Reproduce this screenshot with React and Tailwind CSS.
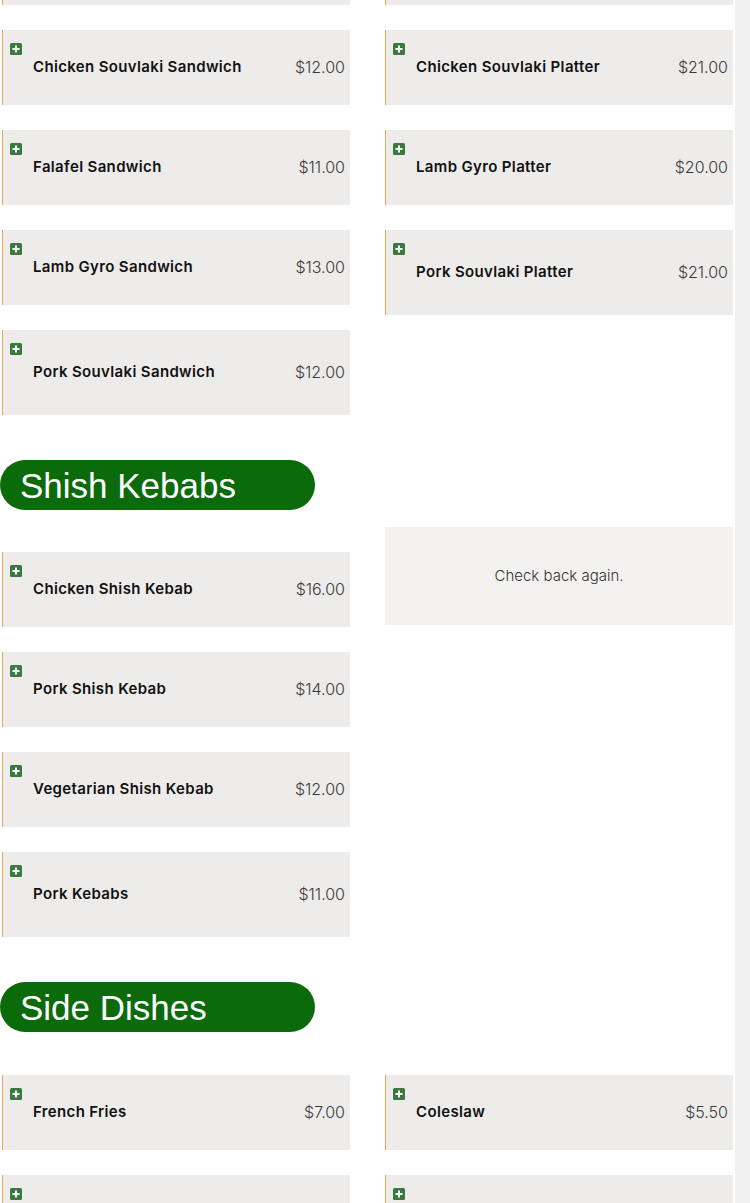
import React from "react";

const font = { fontFamily: "Inter, 'Noto Sans', sans-serif" };

function PlusIcon() {
  return (
    <svg
      className="absolute left-[7px] top-[13px]"
      width="12"
      height="12"
      viewBox="0 0 12 12"
    >
      <rect x="0" y="0" width="12" height="12" rx="1.5" fill="#3b7a3e" />
      <rect x="5" y="2.5" width="2" height="7" fill="#ffffff" />
      <rect x="2.5" y="5" width="7" height="2" fill="#ffffff" />
    </svg>
  );
}

function Card({ name, price, last }) {
  return (
    <div
      className={`relative flex items-center justify-between bg-[#eeeceb] border-l border-[#e3a94f] pl-[30px] pr-[5px] pb-[1px] ${
        last ? "h-[85px]" : "h-[75px]"
      }`}
    >
      <PlusIcon />
      <span className="text-[15px] font-semibold text-[#111] tracking-[0.35px]">{name}</span>
      <span className="text-[16px] font-light text-[#3a3a3a]">{price}</span>
    </div>
  );
}

function Column({ items, pt }) {
  return (
    <div className={`flex flex-col gap-[25px] ${pt}`}>
      {items.map((it, i) => (
        <Card key={i} name={it[0]} price={it[1]} last={i === items.length - 1} />
      ))}
    </div>
  );
}

function Heading({ title }) {
  return (
    <div className="mt-[45px] -ml-[2px] h-[50px] w-[315px] rounded-full bg-[#0b6b0b] flex items-center pl-[20px]">
      <span
        className="text-white text-[35px] leading-none"
        style={{ fontFamily: "'Liberation Sans', Arial, sans-serif" }}
      >
        {title}
      </span>
    </div>
  );
}

export default function App() {
  return (
    <div className="flex w-[750px] h-[1203px] overflow-hidden bg-white" style={font}>
      <div className="w-[735px] pl-[2px]">
        <div className="-mt-[70px] grid grid-cols-[348px_348px] gap-x-[35px] items-start">
          <Column
            pt=""
            items={[
              ["", ""],
              ["Chicken Souvlaki Sandwich", "$12.00"],
              ["Falafel Sandwich", "$11.00"],
              ["Lamb Gyro Sandwich", "$13.00"],
              ["Pork Souvlaki Sandwich", "$12.00"],
            ]}
          />
          <Column
            pt=""
            items={[
              ["", ""],
              ["Chicken Souvlaki Platter", "$21.00"],
              ["Lamb Gyro Platter", "$20.00"],
              ["Pork Souvlaki Platter", "$21.00"],
            ]}
          />
        </div>

        <Heading title="Shish Kebabs" />
        <div className="mt-[17px] grid grid-cols-[348px_348px] gap-x-[35px] items-start">
          <Column
            pt="pt-[25px]"
            items={[
              ["Chicken Shish Kebab", "$16.00"],
              ["Pork Shish Kebab", "$14.00"],
              ["Vegetarian Shish Kebab", "$12.00"],
              ["Pork Kebabs", "$11.00"],
            ]}
          />
          <div className="h-[98px] bg-[#f3f2f1] flex items-center justify-center">
            <span className="text-[15px] font-light text-[#333]">Check back again.</span>
          </div>
        </div>

        <Heading title="Side Dishes" />
        <div className="mt-[18px] grid grid-cols-[348px_348px] gap-x-[35px] items-start">
          <Column
            pt="pt-[25px]"
            items={[
              ["French Fries", "$7.00"],
              ["", ""],
              ["", ""],
            ]}
          />
          <Column
            pt="pt-[25px]"
            items={[
              ["Coleslaw", "$5.50"],
              ["", ""],
              ["", ""],
            ]}
          />
        </div>
      </div>
      <div className="w-[15px] h-full bg-[#f1f1f1]" />
    </div>
  );
}
